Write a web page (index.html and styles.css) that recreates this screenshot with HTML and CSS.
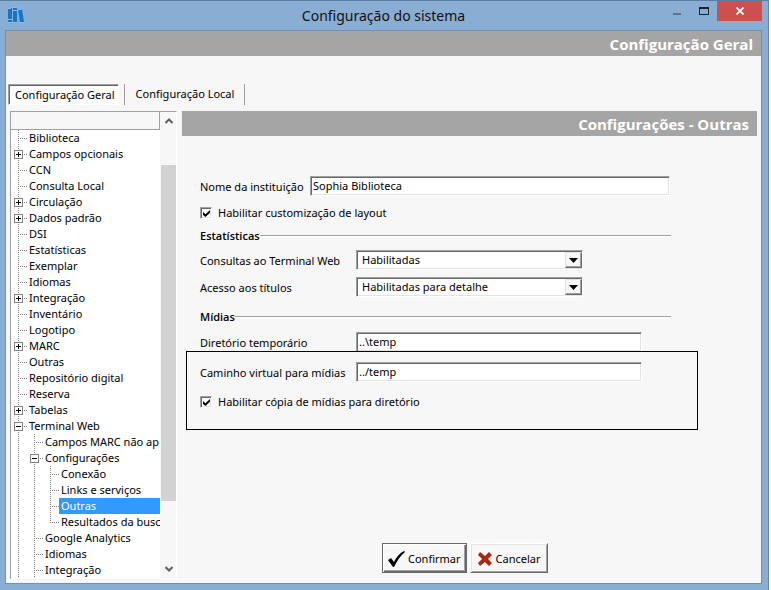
FILE: index.html
```html
<!DOCTYPE html>
<html lang="pt-BR">
<head>
<meta charset="utf-8">
<title>Configuração do sistema</title>
<link rel="stylesheet" href="styles.css">
</head>
<body>
<div class="window">
  <header class="titlebar">
    <svg class="app-icon" width="17" height="17" viewBox="0 0 17 17" aria-hidden="true">
      <path d="M0 1h4v14H0zM5 0h4v15H5z" fill="#1874c4"/>
      <path d="M10 3l4-1 2 13h-4z" fill="#1874c4"/>
      <path d="M0 1.500h3M5 0.500h4M0 15.500h4M5 15.500h4M10 3l4-1M12 15.500h4M0 12.500h4M5 3.500h4" stroke="#7cc4f4" fill="none"/>
    </svg>
    <h1 class="title">Configuração do sistema</h1>
    <div class="window-controls">
      <button class="control minimize" type="button" aria-label="Minimizar"><svg width="8" height="2"><path d="M0 0h8v2H0z" fill="#6a6f76"/></svg></button>
      <button class="control maximize" type="button" aria-label="Maximizar"><svg width="10" height="8"><path d="M0 0h10v8H0zM1 2v5h8V2z" fill="#222" fill-rule="evenodd"/></svg></button>
      <button class="control close" type="button" aria-label="Fechar"><svg width="8" height="8"><path d="M0.500 0.500l7 7M7.500 0.500l-7 7" stroke="#fff" stroke-width="1.700"/></svg></button>
    </div>
  </header>

  <main class="client">
    <h2 class="banner">Configuração Geral</h2>
    <nav class="tabs">
      <button class="tab active" type="button">Configuração Geral</button>
      <button class="tab" type="button">Configuração Local</button>
    </nav>

    <div class="columns">
      <aside class="tree-pane">
        <div class="tree-view">
          <div class="tree-header"></div>
          <ul class="tree">
            <li><div class="row"><span class="twig"></span><span class="label">Biblioteca</span></div></li>
            <li><div class="row"><span class="twig"><button class="expander plus" type="button" aria-label="Expandir"></button></span><span class="label">Campos opcionais</span></div></li>
            <li><div class="row"><span class="twig"></span><span class="label">CCN</span></div></li>
            <li><div class="row"><span class="twig"></span><span class="label">Consulta Local</span></div></li>
            <li><div class="row"><span class="twig"><button class="expander plus" type="button" aria-label="Expandir"></button></span><span class="label">Circulação</span></div></li>
            <li><div class="row"><span class="twig"><button class="expander plus" type="button" aria-label="Expandir"></button></span><span class="label">Dados padrão</span></div></li>
            <li><div class="row"><span class="twig"></span><span class="label">DSI</span></div></li>
            <li><div class="row"><span class="twig"></span><span class="label">Estatísticas</span></div></li>
            <li><div class="row"><span class="twig"></span><span class="label">Exemplar</span></div></li>
            <li><div class="row"><span class="twig"></span><span class="label">Idiomas</span></div></li>
            <li><div class="row"><span class="twig"><button class="expander plus" type="button" aria-label="Expandir"></button></span><span class="label">Integração</span></div></li>
            <li><div class="row"><span class="twig"></span><span class="label">Inventário</span></div></li>
            <li><div class="row"><span class="twig"></span><span class="label">Logotipo</span></div></li>
            <li><div class="row"><span class="twig"><button class="expander plus" type="button" aria-label="Expandir"></button></span><span class="label">MARC</span></div></li>
            <li><div class="row"><span class="twig"></span><span class="label">Outras</span></div></li>
            <li><div class="row"><span class="twig"></span><span class="label">Repositório digital</span></div></li>
            <li><div class="row"><span class="twig"></span><span class="label">Reserva</span></div></li>
            <li><div class="row"><span class="twig"><button class="expander plus" type="button" aria-label="Expandir"></button></span><span class="label">Tabelas</span></div></li>
            <li><div class="row"><span class="twig"><button class="expander" type="button" aria-label="Recolher"></button></span><span class="label">Terminal Web</span></div>
              <ul>
                <li><div class="row"><span class="twig"></span><span class="label">Campos MARC não ap</span></div></li>
                <li><div class="row"><span class="twig"><button class="expander" type="button" aria-label="Recolher"></button></span><span class="label">Configurações</span></div>
                  <ul>
                    <li><div class="row"><span class="twig"></span><span class="label">Conexão</span></div></li>
                    <li><div class="row"><span class="twig"></span><span class="label">Links e serviços</span></div></li>
                    <li><div class="row"><span class="twig"></span><span class="label selected">Outras</span></div></li>
                    <li class="last"><div class="row"><span class="twig"></span><span class="label">Resultados da busc</span></div></li>
                  </ul>
                </li>
                <li><div class="row"><span class="twig"></span><span class="label">Google Analytics</span></div></li>
                <li><div class="row"><span class="twig"></span><span class="label">Idiomas</span></div></li>
                <li><div class="row"><span class="twig"></span><span class="label">Integração</span></div></li>
              </ul>
            </li>
          </ul>
        </div>
        <div class="scrollbar">
          <button class="scroll-button" type="button" aria-label="Rolar para cima"><svg width="8" height="6"><path d="M0.500 5L4 1.500 7.500 5" stroke="#606060" stroke-width="2" fill="none"/></svg></button>
          <div class="track"><div class="thumb"></div></div>
          <button class="scroll-button" type="button" aria-label="Rolar para baixo"><svg width="8" height="6"><path d="M0.500 1L4 4.500 7.500 1" stroke="#606060" stroke-width="2" fill="none"/></svg></button>
        </div>
      </aside>

      <section class="detail">
        <h2 class="banner">Configurações - Outras</h2>
        <form class="form">
          <div class="field name-field">
            <label for="nome">Nome da instituição</label>
            <input class="text" id="nome" type="text" value="Sophia Biblioteca">
          </div>
          <label class="check"><input type="checkbox" checked>Habilitar customização de layout</label>
          <h3 class="section">Estatísticas</h3>
          <div class="field">
            <label for="consultas">Consultas ao Terminal Web</label>
            <span class="select"><select id="consultas"><option>Habilitadas</option></select><svg class="drop" width="17" height="16" aria-hidden="true"><path d="M3 5h9L7.500 10z" fill="#000"/></svg></span>
          </div>
          <div class="field">
            <label for="acesso">Acesso aos títulos</label>
            <span class="select"><select id="acesso"><option>Habilitadas para detalhe</option></select><svg class="drop" width="17" height="16" aria-hidden="true"><path d="M3 5h9L7.500 10z" fill="#000"/></svg></span>
          </div>
          <h3 class="section media">Mídias</h3>
          <div class="field">
            <label for="diretorio">Diretório temporário</label>
            <input class="text path" id="diretorio" type="text" value="..\temp">
          </div>
          <div class="outlined">
            <div class="field">
              <label for="caminho">Caminho virtual para mídias</label>
              <input class="text path" id="caminho" type="text" value="../temp">
            </div>
            <label class="check"><input type="checkbox" checked>Habilitar cópia de mídias para diretório</label>
          </div>
        </form>
        <footer class="actions">
          <button class="action primary" type="button"><svg width="17" height="16" viewBox="0 0 17 16" aria-hidden="true"><path d="M0 9l3-2 3 4C8 6 12 2 16 0l1 1C12 5 9 10 6 16H5z" fill="#000"/></svg>Confirmar</button>
          <button class="action" type="button"><svg width="14" height="14" viewBox="0 0 14 14" aria-hidden="true"><path d="M2 0l5 4 4-4 3 3-4 4 4 4-3 3-4-4-5 4-2-3 4-4-4-4z" fill="#a82814"/></svg>Cancelar</button>
        </footer>
      </section>
    </div>
  </main>
</div>
</body>
</html>
```

FILE: styles.css
```css
* { box-sizing: border-box; }

body {
  margin: 0;
  background: #fff;
  color: #000;
  font: 11px/16px "Noto Sans", "Open Sans", sans-serif;
}

button, input, select { font: inherit; color: inherit; margin: 0; padding: 0; }
h1, h2, h3, ul { margin: 0; padding: 0; }

.window {
  display: flex;
  flex-direction: column;
  height: 100vh;
  margin-right: 2px;
  padding: 0 6px 6px 5px;
  background: #8aaed3;
  border-top: 1px solid #5d7f9f;
  border-right: 1px solid #6488ad;
}

.titlebar {
  display: grid;
  grid-template-columns: 1fr auto 1fr;
  height: 29px;
}
.app-icon { margin: 6px 0 0 3px; }
.title { font-size: 14px; font-weight: 400; line-height: 29px; color: #111; }
.window-controls { display: flex; justify-content: flex-end; align-items: flex-start; }
.control {
  display: flex;
  align-items: center;
  justify-content: center;
  width: 27px;
  height: 20px;
  border: 0;
  background: none;
}
.minimize { padding-top: 6px; }
.close { width: 45px; background: #cc5050; }

.client {
  flex: 1;
  min-height: 0;
  display: flex;
  flex-direction: column;
  border: 1px solid #6c91b6;
  background: #f7f7f7;
}

.banner {
  padding-right: 8px;
  background: #a5a5a5;
  color: #fff;
  font-family: "Open Sans", "Noto Sans", sans-serif;
  font-size: 15px;
  font-weight: 700;
  line-height: 26px;
  height: 25px;
  text-align: right;
}

.tabs { display: flex; padding: 28px 0 0 2px; height: 55px; }
.tab {
  height: 21px;
  padding: 0 10px 2px 11px;
  border: 0;
  border-right: 1px solid #a0a0a0;
  background: none;
}
.tab.active {
  padding: 0 3px 0 6px;
  margin-right: 5px;
  border: 1px solid;
  border-color: #a0a0a0 #fff #fff #a0a0a0;
  box-shadow: inset 1px 1px #696969;
  background: #fcfcfc;
}
.tab.active + .tab { border-left: 1px solid #a0a0a0; }

.columns { flex: 1; min-height: 0; display: flex; gap: 5px; padding: 0 4px 4px; }

.tree-pane {
  display: flex;
  width: 167px;
  border-top: 1px solid #a0a0a0;
  border-left: 1px solid #a0a0a0;
  border-right: 1px solid #fff;
  background: #fff;
}
.tree-view { flex: 1; min-width: 0; overflow: hidden; }
.tree-header {
  height: 18px;
  border-right: 1px solid #a0a0a0;
  border-bottom: 1px solid #a0a0a0;
  background: #f7f7f7;
}
.tree, .tree ul { list-style: none; }
.tree ul { margin-left: 16px; }
.tree li {
  background: repeating-linear-gradient(#808080 0 1px, transparent 1px 2px) 7px 0 / 1px 100% no-repeat;
}
.tree li.last { background-size: 1px 8px; }
.row { display: flex; height: 16px; white-space: nowrap; }
.twig {
  flex: none;
  width: 16px;
  padding: 4px 0 0 3px;
  background: repeating-linear-gradient(90deg, #808080 0 1px, transparent 1px 2px) 7px 8px / 9px 1px no-repeat;
}
.expander {
  display: block;
  width: 9px;
  height: 9px;
  border: 1px solid #808080;
  background: linear-gradient(#000, #000) center / 5px 1px no-repeat #fff;
}
.expander.plus {
  background:
    linear-gradient(#000, #000) center / 5px 1px no-repeat,
    linear-gradient(#000, #000) center / 1px 5px no-repeat,
    #fff;
}
.label { flex: 1; padding-left: 2px; }
.label.selected { background: #3399ff; color: #fff; outline: 1px dotted #d07030; outline-offset: -1px; }

.scrollbar { display: flex; flex-direction: column; width: 16px; padding: 0 0 2px 1px; background: #f7f7f7; }
.scroll-button {
  display: flex;
  align-items: center;
  justify-content: center;
  height: 17px;
  border: 0;
  background: none;
}
.track { flex: 1; padding-top: 36px; }
.thumb { height: 85%; max-height: 336px; background: #d2d2d2; }

.detail { flex: 1; display: flex; flex-direction: column; min-width: 0; }
.form { flex: 1; padding: 40px 18px 0; }
.field { display: flex; align-items: center; height: 20px; margin-bottom: 7px; }
.field label { width: 156px; padding-top: 2px; }
.name-field { margin-bottom: 9px; }
.name-field label { width: 110px; }

.text {
  width: 360px;
  height: 20px;
  padding: 0 2px 1px;
  border: 1px solid;
  border-color: #a0a0a0 #fff #fff #a0a0a0;
  border-radius: 0;
  box-shadow: inset 1px 1px #696969, inset -1px -1px #e3e3e3;
  background: #fff;
}
.text.path { width: 286px; }

.check { display: flex; align-items: center; gap: 6px; height: 16px; }
.check input {
  appearance: none;
  width: 12px;
  height: 12px;
  border: 1px solid;
  border-color: #a0a0a0 #fff #fff #a0a0a0;
  box-shadow: inset 1px 1px #696969, inset -1px -1px #e3e3e3;
  background: #fff;
}
.check input:checked::before {
  content: "";
  display: block;
  width: 7px;
  height: 7px;
  margin: 2px 0 0 2px;
  background: #000;
  clip-path: polygon(0 28%, 35% 60%, 100% 0, 100% 40%, 35% 100%, 0 70%);
}

.section {
  display: flex;
  align-items: center;
  width: 471px;
  margin: 7px 0 6px;
  font-family: "Open Sans", "Noto Sans", sans-serif;
  font-size: 11px;
  font-weight: 600;
  line-height: 16px;
}
.section::after { content: ""; flex: 1; height: 2px; background: linear-gradient(#a0a0a0 1px, #fff 1px); }
.section.media { margin: 12px 0 7px; }

.select { position: relative; width: 227px; height: 20px; }
.select select {
  appearance: none;
  display: block;
  width: 100%;
  height: 20px;
  padding: 0 20px 1px 5px;
  border: 1px solid;
  border-color: #a0a0a0 #fff #fff #a0a0a0;
  border-radius: 0;
  box-shadow: inset 1px 1px #696969, inset -1px -1px #e3e3e3;
  background: #fff;
}
.drop {
  position: absolute;
  top: 2px;
  right: 1px;
  border: 1px solid;
  border-color: #e3e3e3 #696969 #696969 #e3e3e3;
  box-shadow: inset -1px -1px #a0a0a0;
  background: #f7f7f7;
  pointer-events: none;
}

.outlined {
  position: relative;
  width: 512px;
  height: 79px;
  margin: -8px 0 0 -14px;
  padding: 10px 13px 0;
  border: 1px solid #000;
  background: #f7f7f7;
}
.outlined .field { margin-bottom: 12px; }

.actions { display: flex; gap: 3px; padding: 0 0 6px 200px; }
.action {
  display: flex;
  align-items: center;
  gap: 4px;
  height: 30px;
  padding: 1px 6px 0 7px;
  border: 1px solid;
  border-color: #fff #696969 #696969 #fff;
  box-shadow: inset 1px 1px #e3e3e3, inset -1px -1px #a0a0a0;
  background: #f7f7f7;
}
.primary {
  gap: 3px;
  padding: 1px 5px 0;
  border-color: #696969;
  box-shadow: inset 1px 1px #fff, inset -1px -1px #696969, inset -2px -2px #a0a0a0;
}
```
